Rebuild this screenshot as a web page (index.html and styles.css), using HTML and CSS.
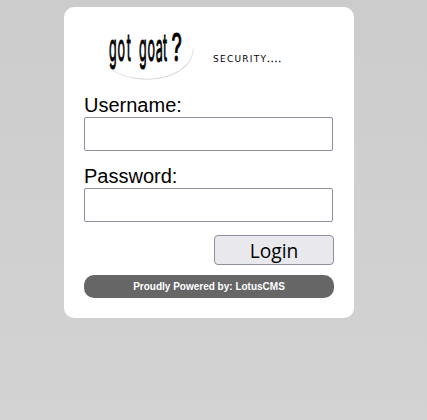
FILE: index.html
```html
<!DOCTYPE html>
<html lang="en">
<head>
<meta charset="utf-8">
<title>Login</title>
<link rel="stylesheet" href="styles.css">
</head>
<body>
<main class="card">
  <svg class="logo" width="250" height="68" viewBox="84 27 250 68">
    <path class="swoosh" d="M112 70 C122 76 134 79.5 148 79.3 C173 79 193 67 193 49 C193 66 173 78.4 148 78.9 C134 79 122 76 112 70Z"/>
    <text class="brand" transform="translate(109 61) scale(.33 1)" x="0 26 54 75 91 117 142 164">got goat</text>
    <text class="brand" transform="translate(171.5 61) scale(.54 1)">?</text>
    <text class="tag" x="213" y="62" textLength="53">SECURITY</text>
    <text class="tag dots" x="267" y="62" textLength="14">....</text>
  </svg>
  <form class="form">
    <label class="label" for="user">Username:</label>
    <input class="field" id="user" type="text">
    <label class="label" for="pass">Password:</label>
    <input class="field" id="pass" type="password">
    <button class="login" type="button">Login</button>
  </form>
  <footer class="footer">Proudly Powered by: LotusCMS</footer>
</main>
</body>
</html>
```
FILE: styles.css
```css
* { box-sizing: border-box; }
body {
  margin: 0;
  padding-top: 7px;
  min-height: 420px;
  background: linear-gradient(#ccc, #d3d3d3);
  font-family: "Liberation Sans", Arial, sans-serif;
}
.card {
  width: 290px;
  height: 311px;
  margin-left: 64px;
  padding: 20px;
  border-radius: 10px;
  background: #fff;
}
.logo { display: block; overflow: visible; }
.swoosh { fill: #ccc; stroke: #ccc; stroke-width: .3; }
.brand {
  font-family: Inter, sans-serif;
  font-size: 38px;
  fill: #000;
  stroke: #000;
  stroke-width: .8px;
  vector-effect: non-scaling-stroke;
}
.tag { font: 9px "DejaVu Sans", sans-serif; fill: #000; }
.dots { stroke: #000; stroke-width: .3px; }
.form { display: flex; flex-direction: column; }
.label {
  height: 22px;
  font-size: 20px;
  line-height: 20px;
}
.field {
  width: 249px;
  height: 34px;
  margin-bottom: 15px;
  padding: 2px 6px;
  border: 1px solid #8f8f9d;
  border-radius: 2px;
  background: #fff;
  font-size: 20px;
}
.label + .field:nth-of-type(2) { margin-bottom: 13px; }
.login {
  align-self: flex-end;
  width: 120px;
  height: 30px;
  padding: 1px 0 0;
  border: 1px solid #8f8f9d;
  border-radius: 4px;
  background: #e9e9ed;
  color: #000;
  font: 19.2px/28px "Open Sans", sans-serif;
}
.footer {
  height: 23px;
  margin-top: 10px;
  border-radius: 10px;
  background: #666;
  color: #fff;
  font-size: 10px;
  font-weight: bold;
  line-height: 23px;
  text-align: center;
}
```
